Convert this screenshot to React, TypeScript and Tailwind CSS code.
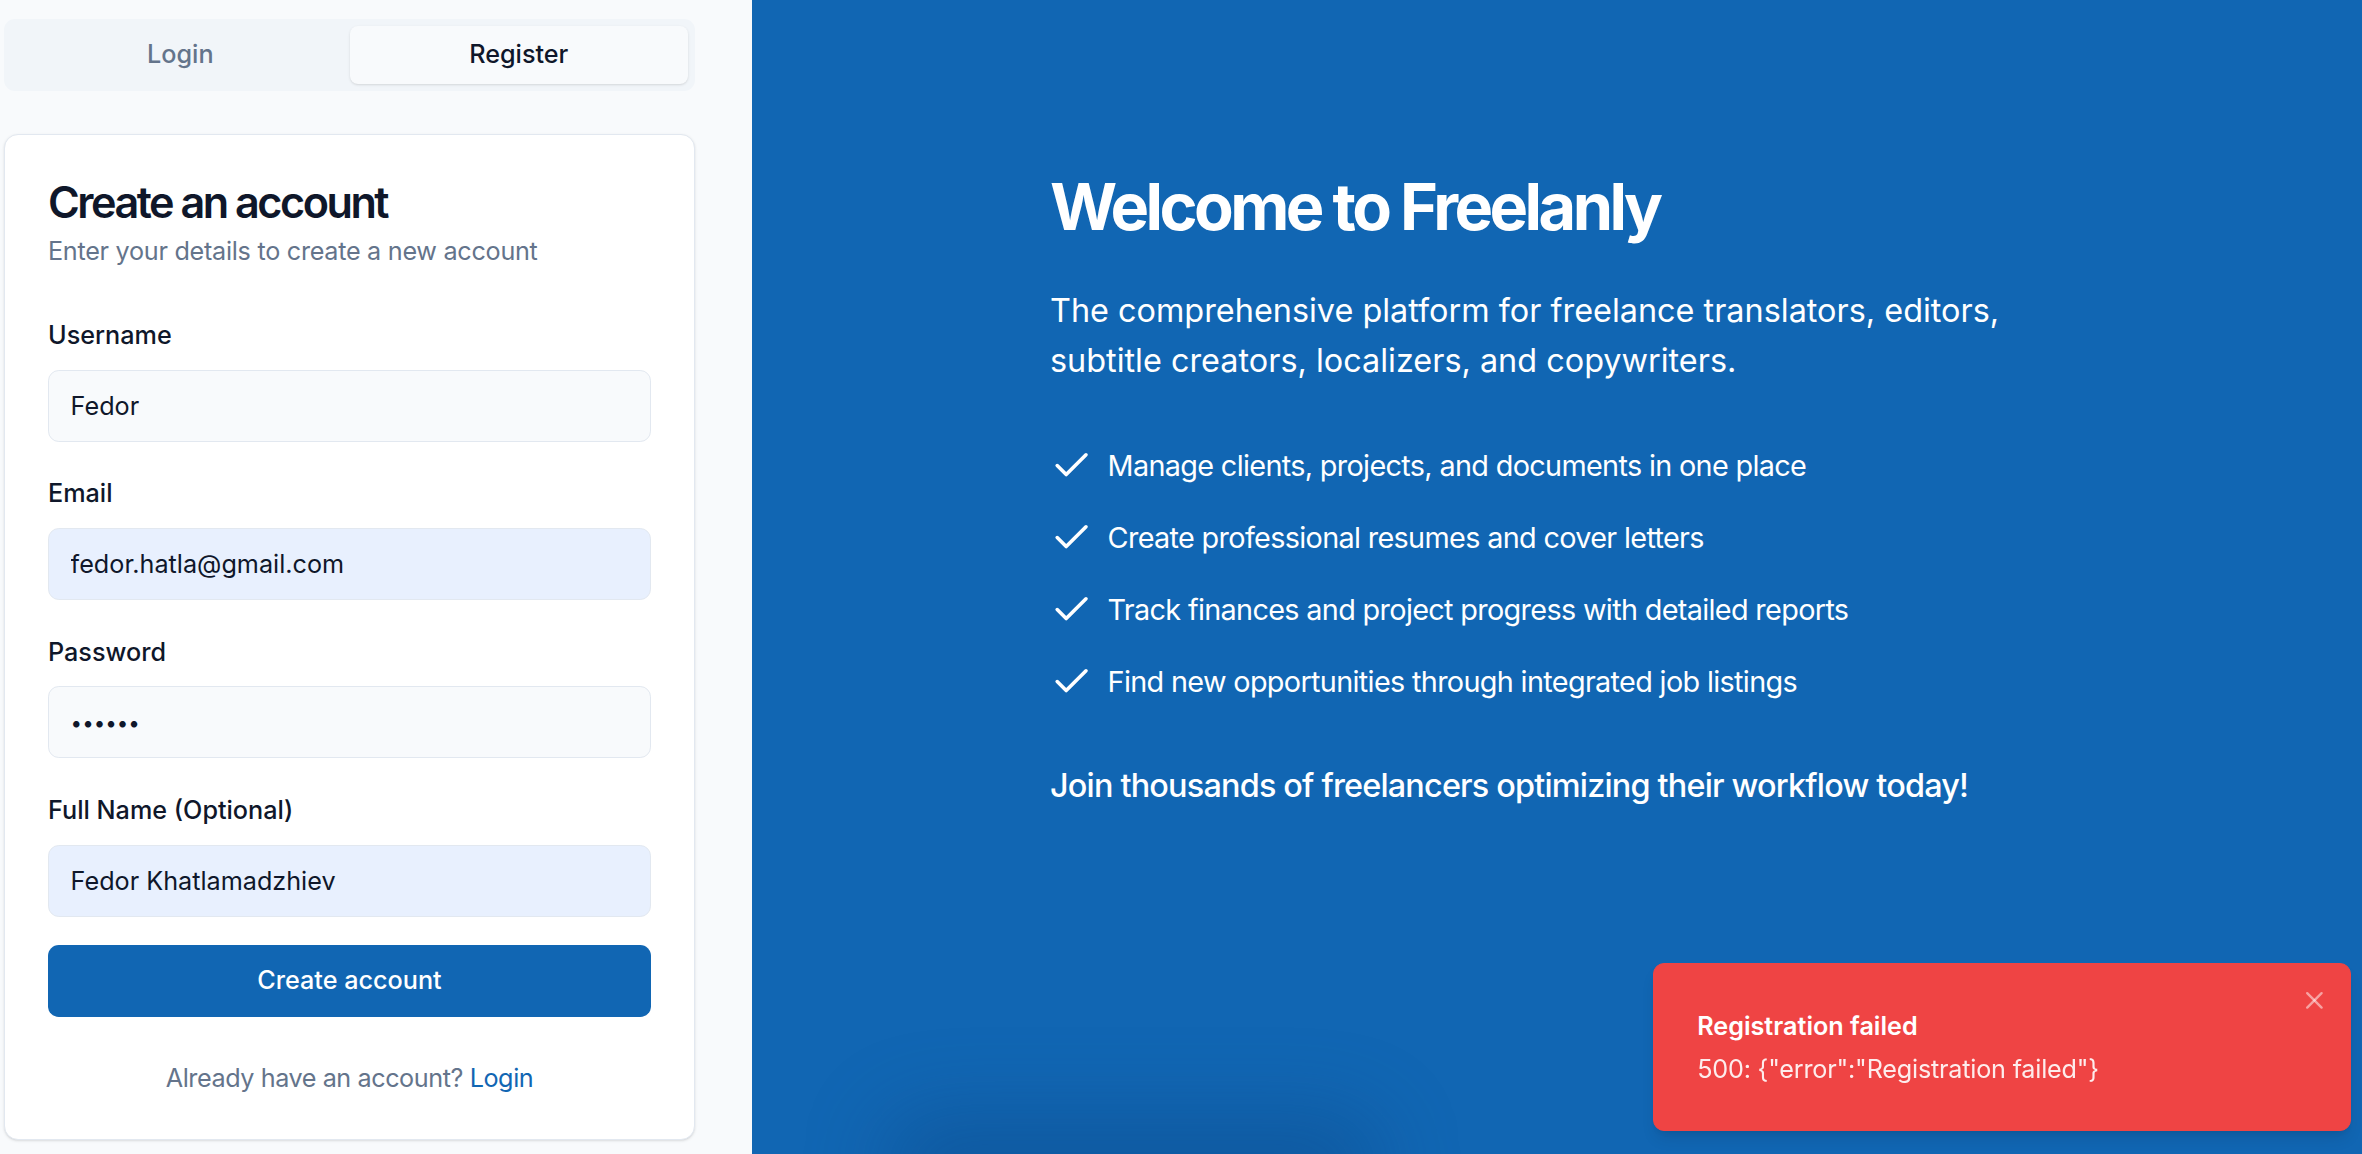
import { Check, X } from "lucide-react";

type Field = {
  id: string;
  label: string;
  value: string;
  masked?: boolean;
  autofilled?: boolean;
};

const fields: Field[] = [
  { id: "username", label: "Username", value: "Fedor" },
  { id: "email", label: "Email", value: "fedor.hatla@gmail.com", autofilled: true },
  { id: "password", label: "Password", value: "••••••", masked: true },
  { id: "fullName", label: "Full Name (Optional)", value: "Fedor Khatlamadzhiev", autofilled: true },
];

const features = [
  "Manage clients, projects, and documents in one place",
  "Create professional resumes and cover letters",
  "Track finances and project progress with detailed reports",
  "Find new opportunities through integrated job listings",
];

function AuthPanel() {
  return (
    <div className="w-[752px] shrink-0 bg-[#f8fafc] pl-[4px] pt-[19px]">
      <div className="w-[691px]">
        {/* Tabs */}
        <div className="grid h-[72px] grid-cols-2 rounded-[11px] bg-[#f1f5f9] p-[7px] text-[25.2px] font-medium">
          <button className="rounded-[8px] text-[#64748b]">Login</button>
          <button className="rounded-[8px] bg-[#f8fafc] text-[#0f172a] shadow-sm">
            Register
          </button>
        </div>

        {/* Card */}
        <div className="mt-[43px] rounded-[14px] border border-[#e2e8f0] bg-white px-[43px] pt-[46px] pb-[43px] shadow-sm">
          <h2 className="text-[43.2px] leading-[43.2px] font-semibold tracking-[-0.058em] text-[#0f172a]">
            Create an account
          </h2>
          <p className="mt-[8.8px] text-[25.2px] leading-[36px] tracking-[-0.011em] text-[#64748b]">
            Enter your details to create a new account
          </p>

          <form className="mt-[53.8px] flex flex-col gap-[39.6px]">
            {fields.map((field) => (
              <div key={field.id} className="flex flex-col">
                <label
                  htmlFor={field.id}
                  className="text-[25.2px] leading-[25.2px] font-medium text-[#0f172a]"
                >
                  {field.label}
                </label>
                <input
                  id={field.id}
                  type="text"
                  readOnly
                  value={field.value}
                  className={`mt-[21.6px] h-[72px] w-full rounded-[10.8px] border border-[#e2e8f0] px-[21.6px] text-[#0f172a] outline-none ${
                    field.autofilled ? "bg-[#e8f0fe]" : "bg-[#f8fafc]"
                  } ${field.masked ? "text-[20.5px]" : "text-[25.2px]"}`}
                />
              </div>
            ))}
          </form>

          <button className="mt-[28px] h-[72px] w-full rounded-[10.8px] bg-[#1166b3] text-[25.2px] font-medium text-white">
            Create account
          </button>

          <p className="mt-[43px] text-center text-[25.2px] leading-[36px] tracking-[-0.017em] text-[#64748b]">
            Already have an account?{" "}
            <a className="text-[#1166b3]">Login</a>
          </p>
        </div>
      </div>
    </div>
  );
}

function HeroPanel() {
  return (
    <div className="relative flex-1 overflow-hidden bg-[#1166b3] text-white">
      <div className="mx-auto w-[1014px] pt-[170.5px]">
        <h1 className="text-[64.8px] leading-[72px] font-bold tracking-[-0.055em]">
          Welcome to Freelanly
        </h1>
        <p className="mt-[43.2px] text-[32.4px] leading-[50.4px]">
          The comprehensive platform for freelance translators, editors,
          subtitle creators, localizers, and copywriters.
        </p>
        <ul className="mt-[57.6px] flex flex-col gap-[28.8px]">
          {features.map((item) => (
            <li
              key={item}
              className="flex items-center gap-[14.4px] text-[28.8px] leading-[43.2px] tracking-[-0.023em]"
            >
              <Check className="h-[43.2px] w-[43.2px] shrink-0" strokeWidth={2} />
              {item}
            </li>
          ))}
        </ul>
        <p className="mt-[57.6px] text-[32.4px] leading-[50.4px] font-medium tracking-[-0.025em]">
          Join thousands of freelancers optimizing their workflow today!
        </p>
      </div>

      {/* faint shadow peeking in at the bottom edge */}
      <div className="absolute bottom-[-60px] left-[130px] h-[100px] w-[500px] rounded-full bg-[#0a3d73]/30 blur-2xl" />
    </div>
  );
}

function Toast() {
  return (
    <div className="absolute right-[11px] bottom-[23px] w-[698px] rounded-[11px] border border-[#ef4444] bg-[#ef4444] py-[43.2px] pr-[57.6px] pl-[43.2px] text-white shadow-lg">
      <div className="grid gap-[7.2px]">
        <div className="text-[25.2px] leading-[36px] font-semibold">
          Registration failed
        </div>
        <div className="text-[25.2px] leading-[36px] tracking-[-0.008em] opacity-90">
          {'500: {"error":"Registration failed"}'}
        </div>
      </div>
      <button className="absolute top-[14.4px] right-[14.4px] p-[7.2px] text-white/50">
        <X className="h-[28.8px] w-[28.8px]" />
      </button>
    </div>
  );
}

export default function App() {
  return (
    <div className="relative flex h-screen w-full overflow-hidden font-[Inter,sans-serif] antialiased">
      <AuthPanel />
      <HeroPanel />
      <Toast />
    </div>
  );
}
